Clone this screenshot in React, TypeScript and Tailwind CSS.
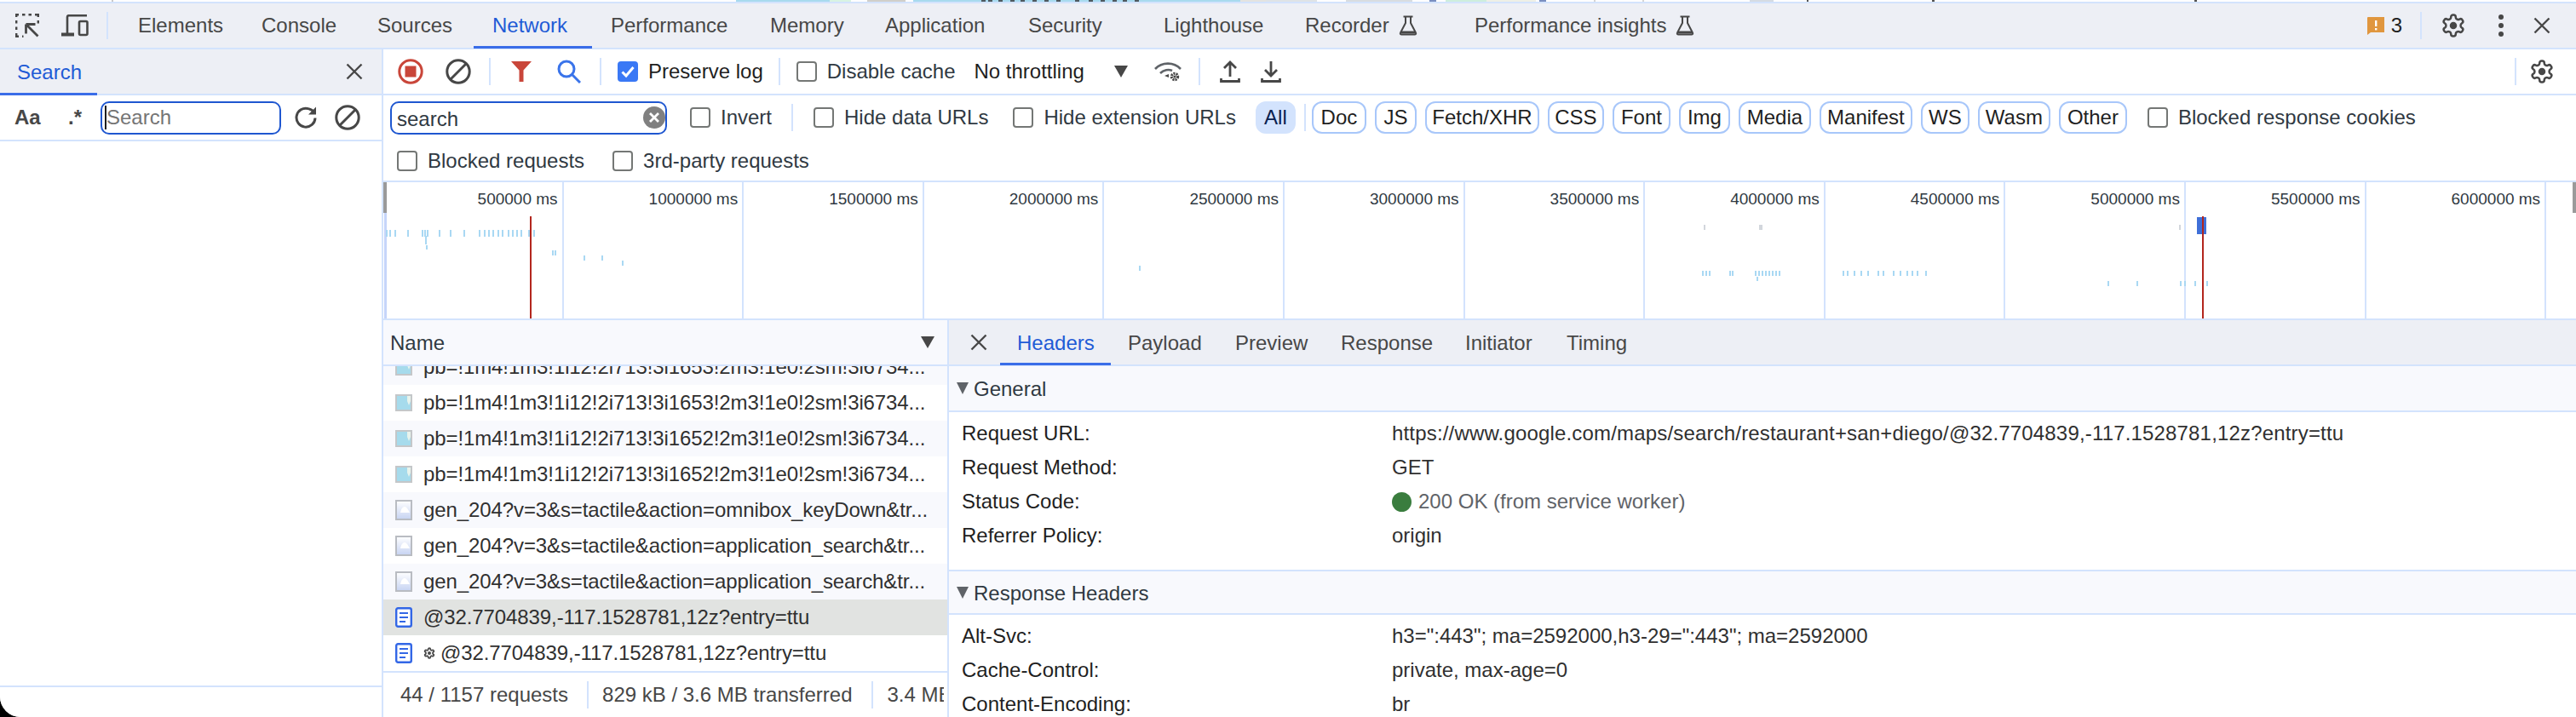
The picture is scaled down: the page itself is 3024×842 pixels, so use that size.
import React from "react";

// ---------------- Data ----------------
const mainTabs = [
  { label: "Elements", width: "w-[145px]" },
  { label: "Console", width: "w-[136px]" },
  { label: "Sources", width: "w-[135px]" },
  { label: "Network", width: "w-[139px]", active: true },
  { label: "Performance", width: "w-[187px]" },
  { label: "Memory", width: "w-[135px]" },
  { label: "Application", width: "w-[168px]" },
  { label: "Security", width: "w-[159px]" },
  { label: "Lighthouse", width: "w-[166px]" },
  { label: "Recorder", width: "w-[199px]", flask: true },
  { label: "Performance insights", width: "w-[290px]", flask: true },
];

const typePills = [
  { label: "Doc", width: "w-[64px]" },
  { label: "JS", width: "w-[49px]" },
  { label: "Fetch/XHR", width: "w-[134px]" },
  { label: "CSS", width: "w-[66px]" },
  { label: "Font", width: "w-[68px]" },
  { label: "Img", width: "w-[60px]" },
  { label: "Media", width: "w-[85px]" },
  { label: "Manifest", width: "w-[109px]" },
  { label: "WS", width: "w-[57px]" },
  { label: "Wasm", width: "w-[85px]" },
  { label: "Other", width: "w-[80px]" },
];

const timeLabels = [
  "500000 ms", "1000000 ms", "1500000 ms", "2000000 ms", "2500000 ms", "3000000 ms",
  "3500000 ms", "4000000 ms", "4500000 ms", "5000000 ms", "5500000 ms", "6000000 ms",
];

const pb1653 = "pb=!1m4!1m3!1i12!2i713!3i1653!2m3!1e0!2sm!3i6734...";
const pb1652 = "pb=!1m4!1m3!1i12!2i713!3i1652!2m3!1e0!2sm!3i6734...";

const requests = [
  { name: pb1653, icon: "img", bg: "bg-[#f8f9fd]" },
  { name: pb1653, icon: "img", bg: "bg-white" },
  { name: pb1652, icon: "img", bg: "bg-[#f8f9fd]" },
  { name: pb1652, icon: "img", bg: "bg-white" },
  { name: "gen_204?v=3&s=tactile&action=omnibox_keyDown&tr...", icon: "gen", bg: "bg-[#f8f9fd]" },
  { name: "gen_204?v=3&s=tactile&action=application_search&tr...", icon: "gen", bg: "bg-white" },
  { name: "gen_204?v=3&s=tactile&action=application_search&tr...", icon: "gen", bg: "bg-[#f8f9fd]" },
  { name: "@32.7704839,-117.1528781,12z?entry=ttu", icon: "doc", bg: "bg-[#e1e3e1]" },
  { name: "@32.7704839,-117.1528781,12z?entry=ttu", icon: "doc", bg: "bg-white", gear: true },
];

const detailTabs = [
  { label: "Headers", width: "w-[130px]", active: true },
  { label: "Payload", width: "w-[126px]" },
  { label: "Preview", width: "w-[124px]" },
  { label: "Response", width: "w-[146px]" },
  { label: "Initiator", width: "w-[119px]" },
  { label: "Timing", width: "w-[120px]" },
];

// x, y, height of the little request marks in the overview (page coordinates)
const blueTicks: number[][] = [
  ...[453, 457, 463, 478, 495, 498, 501, 515, 528, 544, 562, 568, 573, 578, 584, 589, 596, 601, 606, 611, 620, 626].map((x) => [x, 270, 8]),
  [499, 277, 5], [499, 282, 5], [500, 288, 5], [648, 294, 6], [651, 294, 6],
  [685, 300, 6], [706, 300, 6], [730, 306, 6], [1337, 312, 6],
  ...[1998, 2002, 2006, 2030, 2033, 2060, 2064, 2068, 2072, 2076, 2080, 2084, 2088].map((x) => [x, 318, 6]),
  ...[2163, 2168, 2176, 2184, 2192, 2204, 2210, 2222, 2230, 2238, 2244, 2250, 2260].map((x) => [x, 318, 6]),
  [2062, 325, 5],
  ...[2474, 2508, 2559, 2564, 2576, 2590].map((x) => [x, 330, 6]),
];

const grayTicks: number[][] = [
  [2000, 264, 6], [2065, 264, 6], [2067, 264, 6], [2558, 264, 6],
];

// ---------------- Icons ----------------
const gearPath =
  "M12.22 2h-.44a2 2 0 0 0-2 2v.18a2 2 0 0 1-1 1.73l-.43.25a2 2 0 0 1-2 0l-.15-.08a2 2 0 0 0-2.73.73l-.22.38a2 2 0 0 0 .73 2.73l.15.1a2 2 0 0 1 1 1.72v.51a2 2 0 0 1-1 1.74l-.15.09a2 2 0 0 0-.73 2.73l.22.38a2 2 0 0 0 2.73.73l.15-.08a2 2 0 0 1 2 0l.43.25a2 2 0 0 1 1 1.73V20a2 2 0 0 0 2 2h.44a2 2 0 0 0 2-2v-.18a2 2 0 0 1 1-1.73l.43-.25a2 2 0 0 1 2 0l.15.08a2 2 0 0 0 2.73-.73l.22-.39a2 2 0 0 0-.73-2.73l-.15-.08a2 2 0 0 1-1-1.74v-.5a2 2 0 0 1 1-1.74l.15-.09a2 2 0 0 0 .73-2.73l-.22-.38a2 2 0 0 0-2.73-.73l-.15.08a2 2 0 0 1-2 0l-.43-.25a2 2 0 0 1-1-1.73V4a2 2 0 0 0-2-2z";

const Gear = ({ className, weight = "2" }: { className: string; weight?: string }) => (
  <svg viewBox="0 0 24 24" className={className} fill="none" stroke="#474747" strokeWidth={weight}>
    <path d={gearPath} />
    <circle cx="12" cy="12" r="3.4" fill="#474747" stroke="none" />
  </svg>
);

const CloseX = ({ className }: { className: string }) => (
  <svg viewBox="0 0 20 20" className={className} fill="none" stroke="#474747" strokeWidth="2.4">
    <path d="M1.5 1.5 18.5 18.5M18.5 1.5 1.5 18.5" />
  </svg>
);

const Flask = () => (
  <svg viewBox="0 0 24 24" className="w-[24px] h-[24px] shrink-0" fill="none" stroke="#474747" strokeWidth="2">
    <path d="M6.5 1.5h11M9 1.5v7.5L3 20.5c-.6 1 .2 2 1.2 2h15.6c1 0 1.8-1 1.2-2L15 9V1.5" />
    <path d="M4 18.5h16v3H4z" fill="#474747" stroke="none" />
  </svg>
);

const BlockIcon = ({ className }: { className: string }) => (
  <svg viewBox="0 0 30 30" className={className} fill="none" stroke="#474747" strokeWidth="3">
    <circle cx="15" cy="15" r="13.2" />
    <path d="M24.5 5.5 5.5 24.5" />
  </svg>
);

const Thumb = ({ kind }: { kind: string }) => {
  if (kind === "doc") {
    return (
      <svg viewBox="0 0 20 24" className="w-[20px] h-[24px] shrink-0" fill="none">
        <rect x="1.2" y="1.2" width="17.6" height="21.6" rx="2" fill="#fff" stroke="#3367e6" strokeWidth="2.4" />
        <path d="M5 7h10M5 12h10M5 17h7" stroke="#3367e6" strokeWidth="2.2" />
      </svg>
    );
  }
  if (kind === "gen") {
    return (
      <svg viewBox="0 0 20 24" className="w-[20px] h-[24px] shrink-0">
        <defs>
          <linearGradient id="genFill" x1="0" y1="0" x2="0" y2="1">
            <stop offset="0" stopColor="#ffffff" />
            <stop offset="1" stopColor="#c6d3f2" />
          </linearGradient>
        </defs>
        <rect x="1" y="1" width="18" height="22" fill="url(#genFill)" stroke="#b9bcc2" strokeWidth="2" />
        <path d="M6 15c1-5 3-7 5-7s4 3 6 7z" fill="#fff" />
      </svg>
    );
  }
  return (
    <svg viewBox="0 0 20 20" className="w-[20px] h-[20px] shrink-0">
      <rect x="1" y="1" width="18" height="18" fill="#a6dbec" stroke="#c4c7c9" strokeWidth="2" />
      <path d="M14 2h4v6l-2 5-2-5z" fill="#e8f3ec" />
    </svg>
  );
};

const Check = ({ label, checked, className = "" }: { label: string; checked?: boolean; className?: string }) => (
  <div className={`flex items-center gap-[12px] shrink-0 text-[#303942] ${className}`}>
    {checked ? (
      <svg viewBox="0 0 24 24" className="w-[24px] h-[24px] shrink-0">
        <rect width="24" height="24" rx="4" fill="#3a78f5" />
        <path d="M5.5 12.5 10 17l8.5-10" fill="none" stroke="#fff" strokeWidth="3" />
      </svg>
    ) : (
      <div className="w-[24px] h-[24px] shrink-0 rounded-[4px] border-2 border-[#747775] bg-white" />
    )}
    <span className={checked ? "text-[#1f1f1f]" : ""}>{label}</span>
  </div>
);

const Sep = ({ className = "" }: { className?: string }) => (
  <div className={`w-[2px] h-[32px] shrink-0 bg-[#d3e3fd] ${className}`} />
);

// ---------------- Strip of the page showing above DevTools ----------------
const PageStrip = () => (
  <svg className="w-[3024px] h-[2px] shrink-0" viewBox="0 0 3024 2" preserveAspectRatio="none">
    <rect width="3024" height="2" fill="#fff" />
    <rect x="131" width="2" height="2" fill="#c9c9c9" />
    <rect x="864" width="110" height="2" fill="#a8daef" />
    <rect x="974" width="25" height="2" fill="#d8f3e3" />
    <rect x="1018" width="45" height="2" fill="#d0cfca" />
    <rect x="1072" width="278" height="2" fill="#a8daef" />
    {[1152, 1160, 1172, 1186, 1198, 1212, 1226, 1240, 1262, 1278, 1292, 1306, 1318, 1332].map((x) => (
      <rect key={x} x={x} width="5" height="2" fill="#4f5a60" />
    ))}
    <rect x="1350" width="106" height="2" fill="#a8daef" />
    <rect x="1456" width="30" height="2" fill="#e3e3e0" />
    <rect x="1486" width="60" height="2" fill="#dfe3e6" />
    <rect x="1580" width="78" height="2" fill="#d8dce0" />
    <rect x="1678" width="8" height="2" fill="#7a8fc0" />
    <rect x="1697" width="48" height="2" fill="#cdeedd" />
    <rect x="1745" width="58" height="2" fill="#eef0e6" />
    <rect x="1807" width="8" height="2" fill="#7a8fc0" />
    <rect x="1871" width="2" height="2" fill="#d5d5d5" />
    <rect x="1928" width="2" height="2" fill="#d5d5d5" />
    <rect x="2054" width="28" height="2" fill="#d5dbe3" />
    <rect x="2121" width="2" height="2" fill="#555" />
    <rect x="2268" width="3" height="2" fill="#555" />
    <rect x="2576" width="3" height="2" fill="#555" />
  </svg>
);

// ---------------- Top tab bar ----------------
const TopBar = () => (
  <div className="h-[56px] shrink-0 box-border border-t-2 border-b-2 border-[#d3e3fd] bg-[#edeff5] flex items-stretch">
    <div className="w-[140px] shrink-0 flex items-center">
      <svg viewBox="0 0 28 28" className="ml-[18px] w-[28px] h-[28px] shrink-0" fill="none" stroke="#474747" strokeWidth="2.4">
        <path d="M1.2 4V1.2H4M8 1.2h3.5M15.5 1.2H19M23 1.2h3.8V4M26.8 8v3.5M1.2 8v3.5M1.2 15.5V19M1.2 23v3.8H4M8 26.8h1.5" />
        <path d="M12.5 12.5h11M12.5 12.5v11M12.5 12.5 26.5 26.5" strokeWidth="2.8" />
      </svg>
      <svg viewBox="0 0 32 26" className="ml-[26px] w-[32px] h-[26px] shrink-0" fill="none" stroke="#474747" strokeWidth="2.6">
        <path d="M7 22V3a1.8 1.8 0 0 1 1.8-1.8H30" />
        <path d="M0 23.5h15" strokeWidth="4" />
        <rect x="21" y="8" width="9.5" height="16" rx="1.5" />
      </svg>
      <Sep className="ml-[21px]" />
    </div>
    {mainTabs.map((tab) => (
      <div
        key={tab.label}
        className={`relative shrink-0 h-full flex items-center gap-[10px] pl-[22px] ${tab.width} ${tab.active ? "text-[#1f5bd6]" : "text-[#474747]"}`}
      >
        <span>{tab.label}</span>
        {tab.flask && <Flask />}
        {tab.active && <div className="absolute left-0 right-0 bottom-[-1px] h-[3px] bg-[#3a6de8]" />}
      </div>
    ))}
    <div className="flex-1 flex items-center justify-end">
      <svg viewBox="0 0 20 21" className="w-[20px] h-[21px] shrink-0">
        <path d="M1 0h19v18H4l-4 3V1a1 1 0 0 1 1-1z" fill="#e0963e" />
        <rect x="9" y="4" width="2.4" height="7" fill="#fff" />
        <rect x="9" y="13" width="2.4" height="2.4" fill="#fff" />
      </svg>
      <span className="ml-[8px] text-[#1f1f1f]">3</span>
      <Sep className="ml-[21px]" />
      <Gear className="ml-[22px] w-[30px] h-[30px] shrink-0" />
      <svg viewBox="0 0 8 26" className="ml-[37px] w-[8px] h-[26px] shrink-0" fill="#474747">
        <circle cx="4" cy="3" r="3" />
        <circle cx="4" cy="13" r="3" />
        <circle cx="4" cy="23" r="3" />
      </svg>
      <CloseX className="ml-[34px] mr-[30px] w-[20px] h-[20px] shrink-0" />
    </div>
  </div>
);

// ---------------- Left search drawer ----------------
const SearchPanel = () => (
  <div className="w-[450px] shrink-0 box-border border-r-2 border-[#d3e3fd] bg-white flex flex-col">
    <div className="h-[54px] shrink-0 box-border border-b-2 border-[#d3e3fd] bg-[#edeff5] flex items-center pl-[20px] pr-[22px] relative">
      <span className="pt-[2px] text-[#1f5bd6]">Search</span>
      <CloseX className="ml-auto w-[20px] h-[20px]" />
      <div className="absolute left-0 bottom-[-2px] w-[114px] h-[3px] bg-[#3a6de8]" />
    </div>
    <div className="h-[54px] shrink-0 box-border border-b-2 border-[#d3e3fd] flex items-center pl-[17px]">
      <span className="w-[63px] font-bold text-[#474747]">Aa</span>
      <span className="w-[38px] text-[#474747] font-bold">.*</span>
      <div className="w-[212px] h-[39px] box-border border-2 border-[#1f57d0] rounded-[10px] flex items-center pl-[3px] text-[#757575] relative">
        <div className="w-[2px] h-[28px] bg-[#1f1f1f]" />
        <span>Search</span>
      </div>
      <svg viewBox="0 0 28 28" className="ml-[16px] w-[28px] h-[28px] shrink-0" fill="none" stroke="#474747" strokeWidth="3">
        <path d="M24 14.5A11 11 0 1 1 16 3.6c3.2.6 5.5 2.4 7.4 5" />
        <path d="M25 1.5v9h-9z" strokeWidth="0" fill="#474747" />
      </svg>
      <BlockIcon className="ml-[19px] w-[30px] h-[30px] shrink-0" />
    </div>
    <div className="flex-1" />
    <div className="h-[37px] shrink-0 border-t-2 border-[#d3e3fd]" />
  </div>
);

// ---------------- Network toolbar and filters ----------------
const NetworkToolbar = () => (
  <div className="h-[54px] shrink-0 box-border border-b-2 border-[#d3e3fd] flex items-center">
    <svg viewBox="0 0 30 30" className="ml-[17px] w-[30px] h-[30px] shrink-0" fill="none">
      <circle cx="15" cy="15" r="13.2" stroke="#c9463a" strokeWidth="3" />
      <rect x="8.5" y="8.5" width="13" height="13" fill="#c9463a" />
    </svg>
    <BlockIcon className="ml-[26px] w-[30px] h-[30px] shrink-0" />
    <Sep className="ml-[21px]" />
    <svg viewBox="0 0 24 24" className="ml-[24px] w-[24px] h-[24px] shrink-0" fill="#c9463a">
      <path d="M0 0h24l-9.5 10.5V24h-5V10.5z" />
    </svg>
    <svg viewBox="0 0 28 28" className="ml-[30px] w-[28px] h-[28px] shrink-0" fill="none" stroke="#3a74ea" strokeWidth="3">
      <circle cx="11" cy="11" r="9" />
      <path d="M17.5 17.5 27 27" />
    </svg>
    <Sep className="ml-[22px]" />
    <Check label="Preserve log" checked className="ml-[19px]" />
    <Sep className="ml-[18px]" />
    <Check label="Disable cache" className="ml-[19px]" />
    <span className="ml-[22px] text-[#1f1f1f] shrink-0">No throttling</span>
    <svg viewBox="0 0 16 14" className="ml-[35px] w-[16px] h-[14px] shrink-0" fill="#474747">
      <path d="M0 0h16L8 14z" />
    </svg>
    <svg viewBox="0 0 32 24" className="ml-[31px] w-[32px] h-[24px] shrink-0" fill="none" stroke="#5f6368" strokeWidth="2.6">
      <path d="M1 9C9 .5 23 .5 31 9" />
      <path d="M7 14c4-4 10-5 14-3" />
      <path d="M12 17l5-2v4z" fill="#474747" stroke="none" />
      <circle cx="24" cy="18" r="3.6" stroke="#474747" strokeWidth="3.2" strokeDasharray="2 1" />
      <circle cx="24" cy="18" r="1.6" fill="#474747" stroke="none" />
    </svg>
    <Sep className="ml-[20px]" />
    <svg viewBox="0 0 24 26" className="ml-[23px] w-[24px] h-[26px] shrink-0" fill="none" stroke="#474747" strokeWidth="2.8">
      <path d="M12 19V2M5 9l7-7 7 7" />
      <path d="M1.5 21v3.5h21V21" />
    </svg>
    <svg viewBox="0 0 24 26" className="ml-[24px] w-[24px] h-[26px] shrink-0" fill="none" stroke="#474747" strokeWidth="2.8">
      <path d="M12 1v17M5 11l7 7 7-7" />
      <path d="M1.5 21v3.5h21V21" />
    </svg>
    <Sep className="ml-auto" />
    <Gear className="ml-[15px] mr-[25px] w-[30px] h-[30px] shrink-0" />
  </div>
);

const FilterBar = () => (
  <div className="h-[102px] shrink-0 box-border border-b-2 border-[#d3e3fd] flex flex-col">
    <div className="h-[52px] shrink-0 flex items-center">
      <div className="ml-[8px] w-[325px] h-[39px] shrink-0 box-border border-2 border-[#1f57d0] rounded-[10px] flex items-center justify-between pl-[6px] text-[#303942]">
        <span className="pt-[4px]">search</span>
        <svg viewBox="0 0 26 26" className="w-[26px] h-[26px] shrink-0">
          <circle cx="13" cy="13" r="13" fill="#808080" />
          <path d="M8 8l10 10M18 8 8 18" stroke="#fff" strokeWidth="2.8" />
        </svg>
      </div>
      <Check label="Invert" className="ml-[27px]" />
      <Sep className="ml-[23px]" />
      <Check label="Hide data URLs" className="ml-[24px]" />
      <Check label="Hide extension URLs" className="ml-[29px]" />
      <div className="ml-[23px] w-[47px] h-[38px] shrink-0 rounded-[12px] bg-[#d3e3fd] flex items-center justify-center text-[#0a2150]">
        All
      </div>
      <Sep className="ml-[10px]" />
      <div className="ml-[7px] flex gap-[10px]">
        {typePills.map((pill) => (
          <div
            key={pill.label}
            className={`${pill.width} h-[38px] shrink-0 box-border border-2 border-[#a8c7fa] rounded-[12px] flex items-center justify-center text-[#1f1f1f]`}
          >
            {pill.label}
          </div>
        ))}
      </div>
      <Check label="Blocked response cookies" className="ml-[24px]" />
    </div>
    <div className="h-[50px] shrink-0 flex items-center">
      <Check label="Blocked requests" className="ml-[16px]" />
      <Check label="3rd-party requests" className="ml-[33px]" />
    </div>
  </div>
);

// ---------------- Overview timeline ----------------
const Timeline = () => (
  <div className="h-[162px] shrink-0 box-border border-b-2 border-[#d3e3fd] flex relative overflow-hidden">
    {timeLabels.map((label) => (
      <div
        key={label}
        className="w-[211.6px] shrink-0 h-full box-border border-r-2 border-[#d3e3fd] text-right pr-[5px] pt-[10px] text-[19px] text-[#303942]"
      >
        {label}
      </div>
    ))}
    {/* request marks, scroll handles and the red load line */}
    <svg viewBox="0 0 2574 160" className="absolute left-0 top-0 w-[2574px] h-[160px]">
      <rect x="1" y="36" width="3" height="124" fill="#c6d5fa" />
      <rect x="0" y="0" width="4" height="36" fill="#9a9a9a" />
      <rect x="2570" y="0" width="4" height="36" fill="#9a9a9a" />
      {blueTicks.map(([x, y, h], i) => (
        <rect key={i} x={x - 450} y={y - 214} width="2" height={h} fill="#a9d8f3" />
      ))}
      {grayTicks.map(([x, y, h], i) => (
        <rect key={i} x={x - 450} y={y - 214} width="2" height={h} fill="#d2d6dc" />
      ))}
      <rect x="2129" y="41" width="11" height="20" fill="#3f6fd8" />
      <rect x="172" y="40" width="2" height="120" fill="#b3261e" />
      <rect x="2135" y="40" width="2" height="120" fill="#b3261e" />
    </svg>
  </div>
);

// ---------------- Request list ----------------
const RequestList = () => (
  <div className="w-[664px] shrink-0 box-border border-r-2 border-[#d3e3fd] flex flex-col">
    <div className="h-[54px] shrink-0 box-border border-b-2 border-[#d3e3fd] bg-[#f8f9fd] flex items-center pl-[8px] pr-[15px] justify-between text-[#303942]">
      <span className="pt-[2px]">Name</span>
      <svg viewBox="0 0 16 14" className="w-[16px] h-[14px]" fill="#474747">
        <path d="M0 0h16L8 14z" />
      </svg>
    </div>
    <div className="flex-1 min-h-0 overflow-hidden">
      {requests.map((req, i) => (
        <div key={i} className={`h-[42px] flex items-center pl-[14px] gap-[13px] text-[#303030] overflow-hidden ${req.bg} ${i === 0 ? "-mt-[20px]" : ""}`}>
          <Thumb kind={req.icon} />
          {req.gear && <Gear weight="3" className="-mr-[7px] w-[14px] h-[14px] shrink-0" />}
          <span className="tracking-[-0.1px]">{req.name}</span>
        </div>
      ))}
    </div>
    <div className="h-[54px] shrink-0 box-border border-t-2 border-[#d3e3fd] flex items-center pl-[20px] pr-[4px] text-[#474747]">
      <span className="shrink-0">44 / 1157 requests</span>
      <Sep className="ml-[22px]" />
      <span className="ml-[16px] shrink-0">829 kB / 3.6 MB transferred</span>
      <Sep className="ml-[22px]" />
      <div className="ml-[17px] min-w-0 overflow-hidden">3.4 MB resources</div>
    </div>
  </div>
);

// ---------------- Request details ----------------
const HeaderRow = ({ name, children }: { name: string; children: React.ReactNode }) => (
  <div className="h-[40px] flex items-center pl-[15px]">
    <span className="w-[505px] shrink-0 text-[#1f1f1f]">{name}</span>
    <span className="flex items-center gap-[8px] text-[#303030]">{children}</span>
  </div>
);

const SectionTitle = ({ label, className }: { label: string; className: string }) => (
  <div className={`shrink-0 box-border border-b-2 border-[#d3e3fd] bg-[#f8f9fd] flex items-center pl-[9px] text-[#303942] ${className}`}>
    <svg viewBox="0 0 14 14" className="w-[14px] h-[14px] mr-[6px]" fill="#5f6368">
      <path d="M0 0h14L7 14z" />
    </svg>
    <span className="pt-[2px]">{label}</span>
  </div>
);

const Details = () => (
  <div className="flex-1 min-w-0 flex flex-col">
    <div className="h-[54px] shrink-0 box-border border-b-2 border-[#d3e3fd] bg-[#edeff5] flex items-stretch">
      <div className="w-[60px] shrink-0 flex items-center pl-[25px]">
        <CloseX className="w-[20px] h-[20px]" />
      </div>
      {detailTabs.map((tab) => (
        <div
          key={tab.label}
          className={`relative shrink-0 h-full flex items-center pl-[20px] pt-[2px] ${tab.width} ${tab.active ? "text-[#1f5bd6]" : "text-[#474747]"}`}
        >
          {tab.label}
          {tab.active && <div className="absolute left-0 right-0 bottom-[-1px] h-[3px] bg-[#3a6de8]" />}
        </div>
      ))}
    </div>
    <SectionTitle label="General" className="h-[54px]" />
    <div className="h-[187px] shrink-0 box-border border-b-2 border-[#d3e3fd] pt-[5px]">
      <HeaderRow name="Request URL:">
        <span className="tracking-[0.17px]">https://www.google.com/maps/search/restaurant+san+diego/@32.7704839,-117.1528781,12z?entry=ttu</span>
      </HeaderRow>
      <HeaderRow name="Request Method:">GET</HeaderRow>
      <HeaderRow name="Status Code:">
        <span className="w-[23px] h-[23px] rounded-full bg-[#3a7d3e] shrink-0" />
        <span className="text-[#5f6368]">200 OK (from service worker)</span>
      </HeaderRow>
      <HeaderRow name="Referrer Policy:">origin</HeaderRow>
    </div>
    <SectionTitle label="Response Headers" className="h-[51px]" />
    <div className="flex-1 min-h-0 overflow-hidden pt-[5px]">
      <HeaderRow name="Alt-Svc:">h3=":443"; ma=2592000,h3-29=":443"; ma=2592000</HeaderRow>
      <HeaderRow name="Cache-Control:">private, max-age=0</HeaderRow>
      <HeaderRow name="Content-Encoding:">br</HeaderRow>
    </div>
  </div>
);

// ---------------- Page ----------------
export default function App() {
  return (
    <div className="w-[3024px] h-[842px] overflow-hidden bg-black font-['Liberation_Sans',Arial,sans-serif] text-[24px] leading-none whitespace-nowrap">
      <div className="w-full h-full bg-white rounded-bl-[24px] overflow-hidden flex flex-col">
        <PageStrip />
        <TopBar />
        <div className="flex-1 min-h-0 flex">
          <SearchPanel />
          <div className="flex-1 min-w-0 flex flex-col">
            <NetworkToolbar />
            <FilterBar />
            <Timeline />
            <div className="flex-1 min-h-0 flex">
              <RequestList />
              <Details />
            </div>
          </div>
        </div>
      </div>
    </div>
  );
}
